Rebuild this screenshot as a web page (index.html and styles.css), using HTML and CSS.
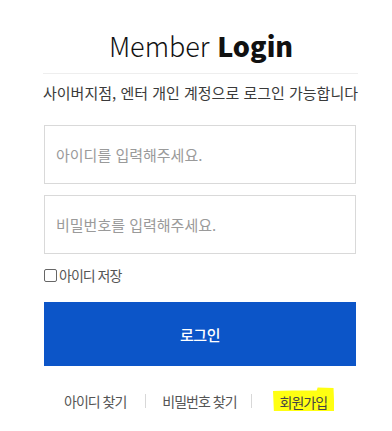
FILE: index.html
```html
<!DOCTYPE html>
<html lang="ko">
<head>
<meta charset="utf-8">
<title>Member Login</title>
<link rel="stylesheet" href="styles.css">
</head>
<body>
<div class="login">
  <h1 class="title"><span class="light">Member</span> <strong>Login</strong></h1>
  <p class="desc">사이버지점, 엔터 개인 계정으로 로그인 가능합니다</p>
  <form class="form">
    <input class="field" type="text" placeholder="아이디를 입력해주세요.">
    <input class="field" type="password" placeholder="비밀번호를 입력해주세요.">
    <label class="save"><span class="box"></span>아이디 저장</label>
    <button class="btn" type="button">로그인</button>
  </form>
  <div class="links">
    <a class="link first">아이디 찾기</a>
    <span class="sep sep1"></span>
    <a class="link second">비밀번호 찾기</a>
    <span class="sep sep2"></span>
    <a class="link join"><span class="mark"><svg class="marker" viewBox="0 0 62 29" preserveAspectRatio="none" aria-hidden="true"><path d="M0,4 L20,3.5 L44,3.5 L45,0.5 L61,1 L62,27 L47,28.5 L45,26 L20,26.5 L1,27 Z" fill="#ffff12"/></svg><span class="mark-text">회원가입</span></span></a>
  </div>
</div>
</body>
</html>
```
FILE: styles.css
```css
* { box-sizing: border-box; }
html, body { margin: 0; padding: 0; background: #fff; }
body {
  font-family: "Noto Sans CJK KR", "Noto Sans", sans-serif;
  color: #333;
}
.login {
  width: 315px;
  margin-left: 43px;
  padding-top: 29px;
}
.title {
  margin: 0;
  font-size: 27px;
  line-height: 34px;
  font-weight: 700;
  color: #111;
  text-align: center;
  padding-bottom: 10px;
  border-bottom: 1px solid #eeeeee;
  padding-left: 1px;
}
.title .light { font-weight: 300; }
.desc {
  margin: 9px 0 0;
  font-size: 15px;
  line-height: 20px;
  letter-spacing: 0;
  color: #3a3a3a;
  text-align: center;
}
.form {
  display: flex;
  flex-direction: column;
  width: 312px;
  margin-left: 1px;
  margin-top: 22px;
}
.field {
  height: 59px;
  border: 1px solid #d9d9d9;
  padding: 0 11px;
  font-family: inherit;
  font-size: 15px;
  letter-spacing: 0;
  outline: none;
  margin: 0 0 11px;
}
.field::placeholder { color: #9a9a9a; }
.save {
  display: flex;
  align-items: center;
  height: 20px;
  font-size: 14px;
  letter-spacing: -1px;
  color: #555;
}
.box {
  width: 13px;
  height: 13px;
  border: 1px solid #666;
  border-radius: 2px;
  margin-right: 2px;
  background: #fff;
}
.btn {
  margin-top: 17px;
  height: 64px;
  border: 0;
  background: #0c55c8;
  color: #fff;
  font-family: inherit;
  font-size: 15px;
  font-weight: 500;
  letter-spacing: -0.5px;
}
.links {
  display: flex;
  align-items: center;
  margin-top: 25px;
  padding-left: 21px;
  height: 20px;
  font-size: 14px;
  letter-spacing: -1px;
  color: #555;
}
.link { white-space: nowrap; }
.sep {
  width: 1px;
  height: 14px;
  background: #d8d8d8;
}
.sep1 { margin: 0 16px 0 19px; }
.sep2 { margin: 0 21px 0 14px; }
.mark {
  position: relative;
  display: inline-block;
  padding: 5px 7px 4px;
  color: #444;
}
.marker {
  position: absolute;
  left: 0;
  top: 0;
  width: 100%;
  height: 100%;
}
.mark-text { position: relative; }
```
